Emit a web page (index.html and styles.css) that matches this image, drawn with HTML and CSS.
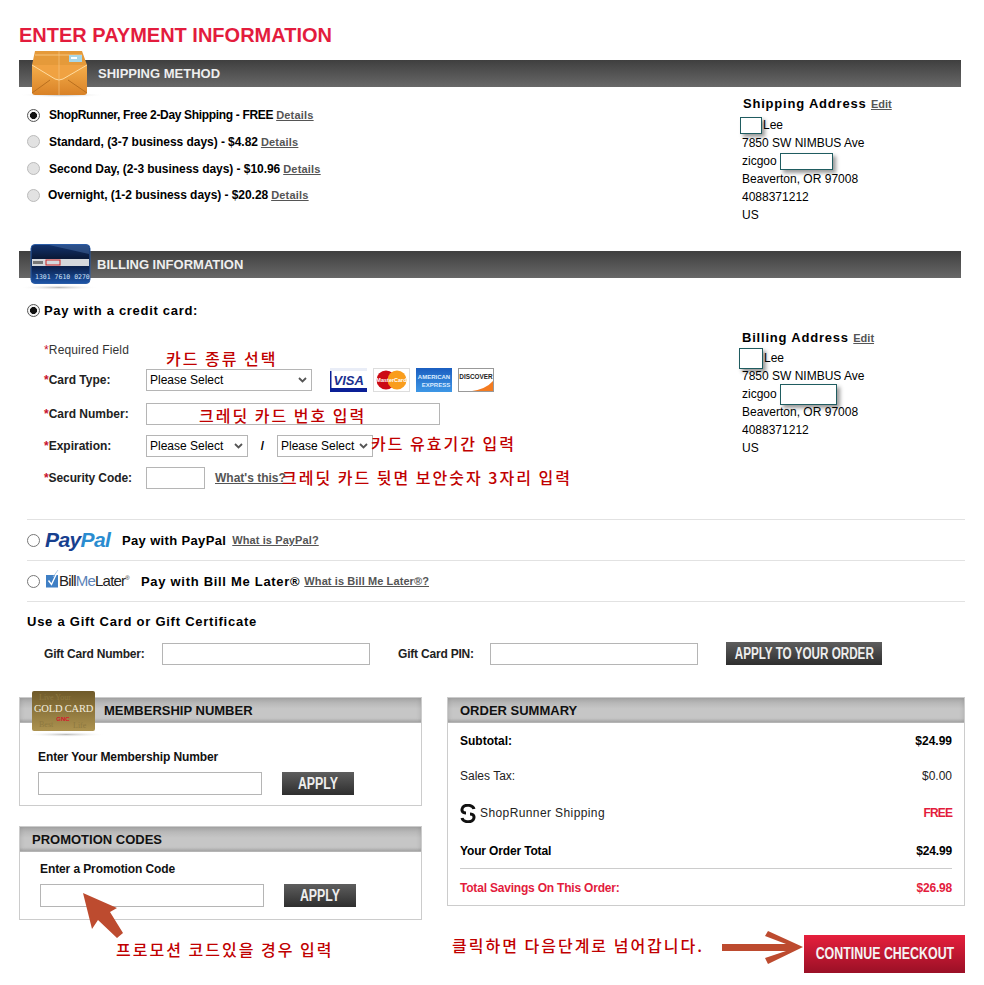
FILE: index.html
```html
<!DOCTYPE html>
<html lang="en">
<head>
    <meta charset="UTF-8">
    <meta name="viewport" content="width=device-width, initial-scale=1.0">
    <title>Enter Payment Information</title>
    <link rel="stylesheet" href="styles.css">
</head>
<body>
    <div class="page">
        <h1>ENTER PAYMENT INFORMATION</h1>

        <!-- Shipping -->
        <div class="section-bar">
            <svg class="bar-icon envelope" width="86" height="48" viewBox="0 0 86 48">
                <defs>
                    <linearGradient id="envBody" x1="0" y1="0" x2="0" y2="1">
                        <stop offset="0" stop-color="#f5ae4b"/>
                        <stop offset="1" stop-color="#d98227"/>
                    </linearGradient>
                    <radialGradient id="floor">
                        <stop offset="0" stop-color="#bbb"/>
                        <stop offset="1" stop-color="#fff" stop-opacity="0"/>
                    </radialGradient>
                </defs>
                <ellipse cx="43" cy="45" rx="43" ry="2.5" fill="url(#floor)"/>
                <path d="M16 1h47l5 14H13z" fill="#e59a3a"/>
                <path d="M16 5h47" stroke="#f7c57c"/>
                <path d="M13 15h55v27q0 3-3 3H16q-3 0-3-3z" fill="url(#envBody)"/>
                <path d="M13 15l23 14q4 2 8 0l24-14z" fill="#f0a242"/>
                <path d="M13 15l23 14q4 2 8 0l24-14" fill="none" stroke="#ffdca0"/>
                <path d="M13 43l18-13M68 43L49 30" stroke="#b96f1e" fill="none"/>
                <path d="M40 1v44" stroke="#f6c98a" stroke-width=".6"/>
                <rect x="50" y="5" width="13" height="7" fill="#a8d6e6"/>
                <rect x="52" y="7" width="6" height="2" fill="#fff"/>
            </svg>
            <span class="bar-title">SHIPPING METHOD</span>
        </div>
        <div class="section-body shipping-body">
            <div class="shipping-options">
                <div class="ship-row first-option"><input class="radio" type="radio" name="ship" checked><span>ShopRunner, Free 2-Day Shipping - FREE</span> <a class="more">Details</a></div>
                <div class="ship-row"><input class="radio off" type="radio" name="ship"><span>Standard, (3-7 business days) - $4.82</span> <a class="more">Details</a></div>
                <div class="ship-row"><input class="radio off" type="radio" name="ship"><span>Second Day, (2-3 business days) - $10.96</span> <a class="more">Details</a></div>
                <div class="ship-row tight"><input class="radio off" type="radio" name="ship"><span>Overnight, (1-2 business days) - $20.28</span> <a class="more">Details</a></div>
            </div>
            <div class="address shipping-address">
                <div class="address-head">Shipping Address <a class="more">Edit</a></div>
                <div><span class="redact first"></span>Lee</div>
                <div>7850 SW NIMBUS Ave</div>
                <div>zicgoo <span class="redact last"></span></div>
                <div>Beaverton, OR 97008</div>
                <div>4088371212</div>
                <div>US</div>
            </div>
        </div>

        <!-- Billing -->
        <div class="section-bar">
            <svg class="bar-icon card-icon" width="86" height="48" viewBox="0 0 86 48">
                <defs>
                    <linearGradient id="cardBody" x1="0" y1="0" x2="0" y2="1">
                        <stop offset="0" stop-color="#12336e"/>
                        <stop offset=".35" stop-color="#0a1a38"/>
                        <stop offset=".6" stop-color="#0c2452"/>
                        <stop offset="1" stop-color="#1d55a8"/>
                    </linearGradient>
                </defs>
                <ellipse cx="40" cy="43.5" rx="40" ry="2.5" fill="url(#floor)"/>
                <rect x="12" y="0.5" width="59" height="39" rx="4" fill="url(#cardBody)" stroke="#2b5da6"/>
                <path d="M30 1h37q3 0 3 3v6z" fill="#5f8ccc" opacity=".35"/>
                <rect x="13" y="15" width="57" height="7" fill="#d5d8dc"/>
                <rect x="14" y="17" width="10" height="3" fill="#777"/>
                <rect x="27" y="16" width="14" height="5" fill="none" stroke="#cc2222"/>
                <text class="card-digits" x="16" y="35">1301 7610 0270</text>
            </svg>
            <span class="bar-title billing-title">BILLING INFORMATION</span>
        </div>
        <div class="section-body billing-body">
            <div class="billing-form">
                <div class="pay-head"><input class="radio" type="radio" name="pay" checked> <strong>Pay with a credit card:</strong></div>
                <div class="required"><i>*</i>Required Field</div>
                <div class="form-row card-type-row">
                    <label><i>*</i>Card Type:</label>
                    <select class="select-wide"><option>Please Select</option></select>
                    <div class="card-logos">
                        <svg width="37" height="24" viewBox="0 0 37 24">
                            <rect width="37" height="24" fill="#fff"/>
                            <rect y="20" width="37" height="4" fill="#0a1f96"/>
                            <rect width="1.5" height="24" fill="#0a1f96"/>
                            <path d="M0 0h37v3H0z" fill="#e9edf7"/>
                            <text class="logo-visa" x="3.5" y="17">VISA</text>
                        </svg>
                        <svg width="37" height="24" viewBox="0 0 37 24">
                            <rect x=".5" y=".5" width="36" height="23" fill="#fff" stroke="#ddd"/>
                            <circle cx="13" cy="12" r="9.5" fill="#cc0a14"/>
                            <circle cx="24" cy="12" r="9.5" fill="#f99d1c"/>
                            <text class="logo-mc" x="18.5" y="14" text-anchor="middle">MasterCard</text>
                        </svg>
                        <svg width="36" height="24" viewBox="0 0 36 24">
                            <defs>
                                <linearGradient id="amex" x1="0" y1="0" x2="0" y2="1">
                                    <stop offset="0" stop-color="#1b5ec0"/>
                                    <stop offset="1" stop-color="#3d97e6"/>
                                </linearGradient>
                            </defs>
                            <rect width="36" height="24" fill="url(#amex)"/>
                            <text class="logo-amex" x="18" y="10.5" text-anchor="middle">AMERICAN</text>
                            <text class="logo-amex" x="20" y="18.5" text-anchor="middle">EXPRESS</text>
                        </svg>
                        <svg width="36" height="24" viewBox="0 0 36 24">
                            <rect x=".5" y=".5" width="35" height="23" fill="#fff" stroke="#999"/>
                            <path d="M35 13v10H14q14-2 21-10z" fill="#f47b20"/>
                            <text class="logo-disc" x="18" y="11" text-anchor="middle">DISCOVER</text>
                        </svg>
                    </div>
                </div>
                <div class="form-row">
                    <label><i>*</i>Card Number:</label>
                    <input class="field number-field" type="text">
                </div>
                <div class="form-row">
                    <label><i>*</i>Expiration:</label>
                    <select class="select-month"><option>Please Select</option></select>
                    <span class="slash">/</span>
                    <select class="select-year"><option>Please Select</option></select>
                </div>
                <div class="form-row">
                    <label class="code-label"><i>*</i>Security Code:</label>
                    <input class="field code-field" type="text">
                    <a class="more whats-this">What's this?</a>
                </div>
            </div>
            <div class="address billing-address">
                <div class="address-head">Billing Address <a class="more">Edit</a></div>
                <div><span class="redact first tall"></span>Lee</div>
                <div>7850 SW NIMBUS Ave</div>
                <div>zicgoo <span class="redact last tall wide"></span></div>
                <div>Beaverton, OR 97008</div>
                <div>4088371212</div>
                <div>US</div>
            </div>
        </div>

        <!-- Other payment types -->
        <div class="pay-alt">
            <input class="radio plain" type="radio" name="pay">
            <span class="paypal-logo"><b>Pay</b><em>Pal</em></span>
            <strong class="paypal-label">Pay with PayPal</strong>
            <a class="more">What is PayPal?</a>
        </div>
        <div class="pay-alt">
            <input class="radio plain" type="radio" name="pay">
            <span class="bml-logo">
                <svg width="14" height="22" viewBox="0 0 14 22">
                    <rect x="1" y="5" width="12" height="12.5" fill="#3f7fc4"/>
                    <path d="M3.5 10.5l3 4 6-13" fill="none" stroke="#fff" stroke-width="1.4"/>
                    <path d="M8 7l5-7" fill="none" stroke="#9dbfe2" stroke-width=".8"/>
                </svg>
                <span class="bml-text">Bill<u>Me</u>Later<sup>®</sup></span>
            </span>
            <strong class="bml-label">Pay with Bill Me Later®</strong>
            <a class="more">What is Bill Me Later®?</a>
        </div>

        <!-- Gift card -->
        <div class="gift">
            <h3>Use a Gift Card or Gift Certificate</h3>
            <div class="gift-row">
                <label>Gift Card Number:</label>
                <input class="field gift-field" type="text">
                <label class="pin-label">Gift Card PIN:</label>
                <input class="field gift-field" type="text">
                <button class="dark-btn order-btn"><span>APPLY TO YOUR ORDER</span></button>
            </div>
        </div>

        <div class="bottom">
            <div class="bottom-left">
                <div class="panel membership">
                    <svg class="gold-card" width="80" height="46" viewBox="0 0 80 46">
                        <defs>
                            <linearGradient id="gold" x1="0" y1="0" x2="0" y2="1">
                                <stop offset="0" stop-color="#6f5a2a"/>
                                <stop offset="1" stop-color="#ad9350"/>
                            </linearGradient>
                        </defs>
                        <ellipse cx="40" cy="43.5" rx="40" ry="2.5" fill="url(#floor)"/>
                        <rect x="6" y="0" width="63" height="40" rx="2" fill="url(#gold)"/>
                        <text class="gold-faint" x="13" y="9">Live Your</text>
                        <text class="gold-faint" x="13" y="36">Best</text>
                        <text class="gold-faint" x="47" y="37">Life</text>
                        <text class="gold-text" x="37.5" y="21" text-anchor="middle">GOLD CARD</text>
                        <text class="gold-gnc" x="37" y="30" text-anchor="middle">GNC</text>
                    </svg>
                    <div class="panel-head member-head">MEMBERSHIP NUMBER</div>
                    <div class="panel-body member-body">
                        <div class="panel-label">Enter Your Membership Number</div>
                        <div class="apply-row">
                            <input class="field apply-field" type="text">
                            <button class="dark-btn apply-btn"><span>APPLY</span></button>
                        </div>
                    </div>
                </div>
                <div class="panel promo">
                    <div class="panel-head">PROMOTION CODES</div>
                    <div class="panel-body promo-body">
                        <div class="panel-label">Enter a Promotion Code</div>
                        <div class="apply-row">
                            <input class="field apply-field" type="text">
                            <button class="dark-btn apply-btn"><span>APPLY</span></button>
                        </div>
                    </div>
                </div>
            </div>
            <div class="bottom-right">
                <div class="panel summary">
                    <div class="panel-head">ORDER SUMMARY</div>
                    <div class="summary-body">
                        <div class="sum-row bold subtotal"><span>Subtotal:</span><span>$24.99</span></div>
                        <div class="sum-row tax"><span>Sales Tax:</span><span>$0.00</span></div>
                        <div class="sum-row runner">
                            <span class="sr-name">
                                <svg width="16" height="19" viewBox="0 0 16 19">
                                    <path d="M14 5C13 1 6 0 3 3 1 6 2 9 6 9" fill="none" stroke="#111" stroke-width="3"/>
                                    <path d="M2 14c1 4 8 5 11 2 2-3 1-6-3-6" fill="none" stroke="#111" stroke-width="3"/>
                                </svg>
                                ShopRunner Shipping
                            </span>
                            <span class="red bold free">FREE</span>
                        </div>
                        <div class="sum-row bold total"><span>Your Order Total</span><span>$24.99</span></div>
                        <div class="sum-row bold red savings"><span>Total Savings On This Order:</span><span>$26.98</span></div>
                    </div>
                </div>
                <div class="checkout-row">
                    <button class="checkout-btn"><span>CONTINUE CHECKOUT</span></button>
                </div>
            </div>
        </div>

        <!-- Korean notes drawn over the form -->
        <div class="note note-type">카드 종류 선택</div>
        <div class="note note-number">크레딧 카드 번호 입력</div>
        <div class="note note-expiry">카드 유효기간 입력</div>
        <div class="note note-code">크레딧 카드 뒷면 보안숫자 3자리 입력</div>
        <div class="note note-promo">프로모션 코드있을 경우 입력</div>
        <div class="note note-next">클릭하면 다음단계로 넘어갑니다.</div>
        <svg class="arrow arrow-promo" width="42" height="47" viewBox="83 892 42 47">
            <path d="M83 893L117 908 110 912 123 933 117 938 98 920 92 929z" fill="#bd4b2f"/>
        </svg>
        <svg class="arrow arrow-next" width="82" height="34" viewBox="722 931 82 34">
            <path d="M722 944H786L765 936 768 931 803 947 768 964 765 958 786 951H722z" fill="#bd4b2f"/>
        </svg>
    </div>
</body>
</html>
```

FILE: styles.css
```css
* {
    box-sizing: border-box;
}

body {
    font-family: "Liberation Sans", Arial, sans-serif;
    font-size: 12px;
    color: #000;
    background: #fff;
    margin: 0;
    padding: 0;
}

.page {
    position: relative;
    width: 984px;
    height: 985px;
    padding: 22px 0 0 19px;
    overflow: hidden;
}

h1 {
    margin: 0 0 12px;
    font-size: 20px;
    line-height: 26px;
    font-weight: bold;
    color: #e31c3d;
}

a.more {
    color: #555;
    font-size: 11px;
    font-weight: bold;
    text-decoration: underline;
    letter-spacing: 0.2px;
}

/* dark section bars */
.section-bar {
    position: relative;
    width: 942px;
    height: 27px;
    background: linear-gradient(#3f3f3f, #686868);
    display: flex;
    align-items: center;
}

.bar-title {
    margin-left: 79px;
    color: #eee;
    font-size: 13px;
    font-weight: bold;
}

.billing-title {
    margin-left: 78px;
}

.bar-icon {
    position: absolute;
    left: 0;
}

.envelope {
    top: -10px;
}

.card-icon {
    top: -7px;
}

.card-digits {
    font-family: "DejaVu Sans Mono", monospace;
    font-size: 6.5px;
    fill: #cfe0f5;
}

.section-body {
    position: relative;
    width: 942px;
    display: flex;
    justify-content: space-between;
}

.shipping-body {
    height: 164px;
}

.billing-body {
    height: 241px;
}

/* radios */
.radio {
    appearance: none;
    width: 13px;
    height: 13px;
    margin: 0;
    border: 1px solid #777;
    border-radius: 50%;
    background: #f4f4f4;
    flex-shrink: 0;
}

.radio:checked {
    background: radial-gradient(circle, #111 0, #111 3.2px, #f6f6f6 3.8px);
    border-color: #555;
}

.radio.off {
    background: #e2e2e2;
    border-color: #bbb;
}

.radio.plain {
    background: #fff;
}

/* shipping options */
.shipping-options {
    padding: 15px 0 0 8px;
}

.ship-row {
    display: flex;
    align-items: center;
    height: 26.67px;
    font-weight: bold;
    letter-spacing: -0.05px;
}

.ship-row > span {
    margin: 0 3px 0 9px;
}

.ship-row.first-option > span {
    letter-spacing: -0.33px;
}

.ship-row.tight > span {
    margin-left: 8px;
}

/* addresses */
.address {
    width: 219px;
    line-height: 18px;
}

.shipping-address {
    padding: 8px 0 0 0;
}

.billing-address {
    padding: 51px 0 0;
}

.address > div {
    white-space: nowrap;
}

.address-head {
    font-size: 13px;
    font-weight: bold;
    letter-spacing: 0.8px;
    height: 21px;
}

.address-head a.more {
    letter-spacing: 0;
}

.shipping-address .address-head {
    padding-left: 1px;
}

.billing-address .address-head {
    height: 20px;
}

.redact {
    display: inline-block;
    width: 22px;
    height: 17px;
    margin: -4px 0;
    vertical-align: middle;
    background: #fff;
    border: 1px solid #1f5c60;
    box-shadow: 3px 3px 4px rgba(0, 0, 0, 0.4);
}

.redact.first {
    margin-left: -2px;
    margin-right: 1px;
}

.redact.last {
    width: 53px;
}

.redact.tall {
    height: 21px;
}

.redact.tall.first {
    width: 24px;
    margin-left: -3px;
}

.redact.tall.wide {
    width: 57px;
}

/* card form */
.billing-form {
    padding: 0 0 0 8px;
}

.pay-head {
    display: flex;
    align-items: center;
    gap: 4px;
    height: 26px;
    margin-top: 19px;
    font-size: 13px;
    letter-spacing: 0.7px;
}

.required {
    margin: 19px 0 0 17px;
    height: 17px;
    line-height: 17px;
    color: #333;
    letter-spacing: 0.15px;
}

i {
    font-style: normal;
    color: #c8102e;
}

.form-row {
    display: flex;
    align-items: center;
    height: 22px;
    margin: 10px 0 0 17px;
}

.card-type-row {
    margin-top: 10px;
    margin-bottom: 12px;
}

.form-row label {
    width: 102px;
    font-weight: bold;
    color: #222;
    white-space: nowrap;
}

.form-row label.code-label {
    letter-spacing: -0.1px;
}

select,
.field {
    height: 22px;
    margin: 0;
    border: 1px solid #b5b5b5;
    border-radius: 0;
    background: #fff;
    font-family: "Liberation Sans", Arial, sans-serif;
    font-size: 12px;
    color: #000;
}

select {
    appearance: none;
    padding: 0 3px;
    background: #fff url("data:image/svg+xml,%3Csvg xmlns='http://www.w3.org/2000/svg' width='9' height='6'%3E%3Cpath d='M1 1l3.5 3.5L8 1' fill='none' stroke='%23555' stroke-width='1.8'/%3E%3C/svg%3E") no-repeat right 4px center;
}

.select-wide {
    width: 166px;
}

.select-month {
    width: 102px;
}

.select-year {
    width: 96px;
}

.slash {
    width: 29px;
    text-align: center;
    font-weight: bold;
}

.card-logos {
    display: flex;
    align-items: center;
    gap: 6px;
    margin-left: 18px;
}

.logo-visa {
    font: italic bold 13px "Liberation Sans", sans-serif;
    fill: #1a2f8f;
}

.logo-mc {
    font: bold 5.5px "Liberation Sans", sans-serif;
    fill: #fff;
}

.logo-amex {
    font: bold 6px "Liberation Sans", sans-serif;
    fill: #dcecff;
}

.logo-disc {
    font: bold 6.4px "Liberation Sans", sans-serif;
    fill: #222;
}

.number-field {
    width: 294px;
}

.code-field {
    width: 59px;
}

a.whats-this {
    margin-left: 10px;
    font-size: 12px;
    letter-spacing: 0;
}

/* paypal, bill me later */
.pay-alt {
    display: flex;
    align-items: center;
    width: 938px;
    height: 41px;
    margin-left: 8px;
    border-top: 1px solid #e2e2e2;
}

.pay-alt strong {
    font-size: 13px;
    letter-spacing: 0.35px;
    margin-right: 6px;
}

.pay-alt strong.bml-label {
    letter-spacing: 0.7px;
    margin-right: 4px;
}

.pay-alt a.more {
    letter-spacing: 0.1px;
}

.paypal-logo {
    margin-left: 5px;
    width: 77px;
    font: italic bold 21px "Liberation Sans", sans-serif;
    letter-spacing: -0.6px;
}

.paypal-logo b {
    color: #17408f;
}

.paypal-logo em {
    color: #2a8cd0;
}

.bml-logo {
    display: flex;
    align-items: flex-end;
    margin-left: 5px;
    width: 96px;
    font-size: 15px;
    letter-spacing: -0.8px;
    color: #222;
}

.bml-text {
    margin-bottom: 3px;
}

.bml-logo u {
    text-decoration: none;
    color: #5b82b8;
}

.bml-logo sup {
    font-size: 6px;
}

.gift {
    width: 938px;
    margin-left: 8px;
    border-top: 1px solid #e2e2e2;
    padding-top: 11px;
}

.gift h3 {
    margin: 0;
    font-size: 13px;
    line-height: 18px;
    letter-spacing: 0.75px;
}

.gift-row {
    display: flex;
    align-items: center;
    height: 23px;
    margin: 11px 0 0 17px;
}

.gift-row label {
    width: 118px;
    font-weight: bold;
    color: #222;
    letter-spacing: -0.2px;
    white-space: nowrap;
}

.gift-row label.pin-label {
    width: 92px;
    margin-left: 28px;
}

.gift-field {
    width: 208px;
}

/* buttons */
.dark-btn {
    height: 23px;
    padding: 0;
    border: none;
    background: linear-gradient(#5e5e5e, #2e2e2e);
    color: #eee;
    font-family: "Liberation Sans", Arial, sans-serif;
    font-weight: bold;
    font-size: 16px;
}

.dark-btn span {
    display: inline-block;
    white-space: nowrap;
    transform: scaleX(0.77);
    margin: 0 -20px;
}

.order-btn {
    width: 156px;
    margin-left: 28px;
}

.order-btn span {
    transform: scaleX(0.73);
    margin: 0 -30px;
}

.apply-btn {
    width: 72px;
    margin-left: 20px;
}

/* bottom panels */
.bottom {
    display: flex;
    margin-top: 32px;
}

.bottom-left {
    width: 403px;
}

.bottom-right {
    width: 518px;
    margin-left: 25px;
}

.panel {
    position: relative;
    border: 1px solid #ccc;
    background: #fff;
}

.panel-head {
    height: 25px;
    line-height: 25px;
    padding-left: 12px;
    font-size: 13px;
    font-weight: bold;
    color: #111;
    background: linear-gradient(#acacac, #c6c6c6 45%, #c6c6c6 85%, #b0b0b0);
    box-shadow: inset 0 0 5px rgba(0, 0, 0, 0.15);
    border-bottom: 1px solid #b5b5b5;
}

.member-head {
    padding-left: 84px;
}

.gold-card {
    position: absolute;
    left: 6px;
    top: -7px;
    z-index: 1;
}

.gold-faint {
    font: 8px "Liberation Serif", serif;
    fill: #8d7840;
}

.gold-text {
    font: 10.5px "Liberation Serif", serif;
    fill: #f1ecdd;
    letter-spacing: -0.2px;
}

.gold-gnc {
    font: bold 6px "Liberation Sans", sans-serif;
    fill: #d8142b;
}

.panel-body {
    padding-left: 18px;
}

.membership {
    height: 109px;
}

.member-body {
    padding-top: 26px;
}

.promo {
    height: 94px;
    margin-top: 20px;
}

.promo-body {
    padding: 9px 0 0 20px;
}

.panel-label {
    font-weight: bold;
    line-height: 16px;
    color: #111;
    letter-spacing: -0.1px;
}

.apply-row {
    display: flex;
    margin-top: 7px;
}

.apply-field {
    width: 224px;
    height: 23px;
}

/* summary */
.summary {
    height: 209px;
}

.summary-body {
    padding: 0 12px;
}

.sum-row {
    display: flex;
    align-items: center;
    justify-content: space-between;
    color: #222;
}

.sum-row.subtotal {
    height: 36px;
}

.sum-row.tax {
    height: 34px;
}

.sum-row.runner {
    height: 40px;
}

.sum-row.bold {
    color: #000;
}

.bold {
    font-weight: bold;
}

.sum-row .red,
.sum-row.red {
    color: #e31c3d;
}

.sum-row .free {
    letter-spacing: -0.9px;
}

.sr-name {
    display: flex;
    align-items: center;
    gap: 4px;
    letter-spacing: 0.4px;
}

.sum-row.total {
    height: 36px;
    border-bottom: 1px solid #ccc;
    letter-spacing: -0.15px;
}

.sum-row.savings {
    height: 36px;
    padding-top: 2px;
    letter-spacing: -0.2px;
}

.checkout-row {
    display: flex;
    justify-content: flex-end;
    margin-top: 29px;
}

.checkout-btn {
    width: 161px;
    height: 38px;
    padding: 0;
    border: none;
    background: linear-gradient(#e61f3c, #9a1026);
    color: #f4f4f4;
    font-family: "Liberation Sans", Arial, sans-serif;
    font-size: 17px;
    font-weight: bold;
}

.checkout-btn span {
    display: inline-block;
    white-space: nowrap;
    transform: scaleX(0.73);
    margin: 0 -30px;
}

/* annotations */
.note {
    position: absolute;
    font-family: "Noto Sans CJK KR", sans-serif;
    font-size: 16px;
    line-height: 18px;
    font-weight: 500;
    color: #c00000;
    letter-spacing: 2px;
    white-space: nowrap;
}

.note-type {
    left: 166px;
    top: 349px;
}

.note-number {
    left: 199px;
    top: 406px;
}

.note-expiry {
    left: 371px;
    top: 434px;
}

.note-code {
    left: 282px;
    top: 468px;
}

.note-promo {
    left: 116px;
    top: 940px;
}

.note-next {
    left: 452px;
    top: 936px;
}

.arrow {
    position: absolute;
}

.arrow-promo {
    left: 83px;
    top: 892px;
}

.arrow-next {
    left: 722px;
    top: 931px;
}
```
